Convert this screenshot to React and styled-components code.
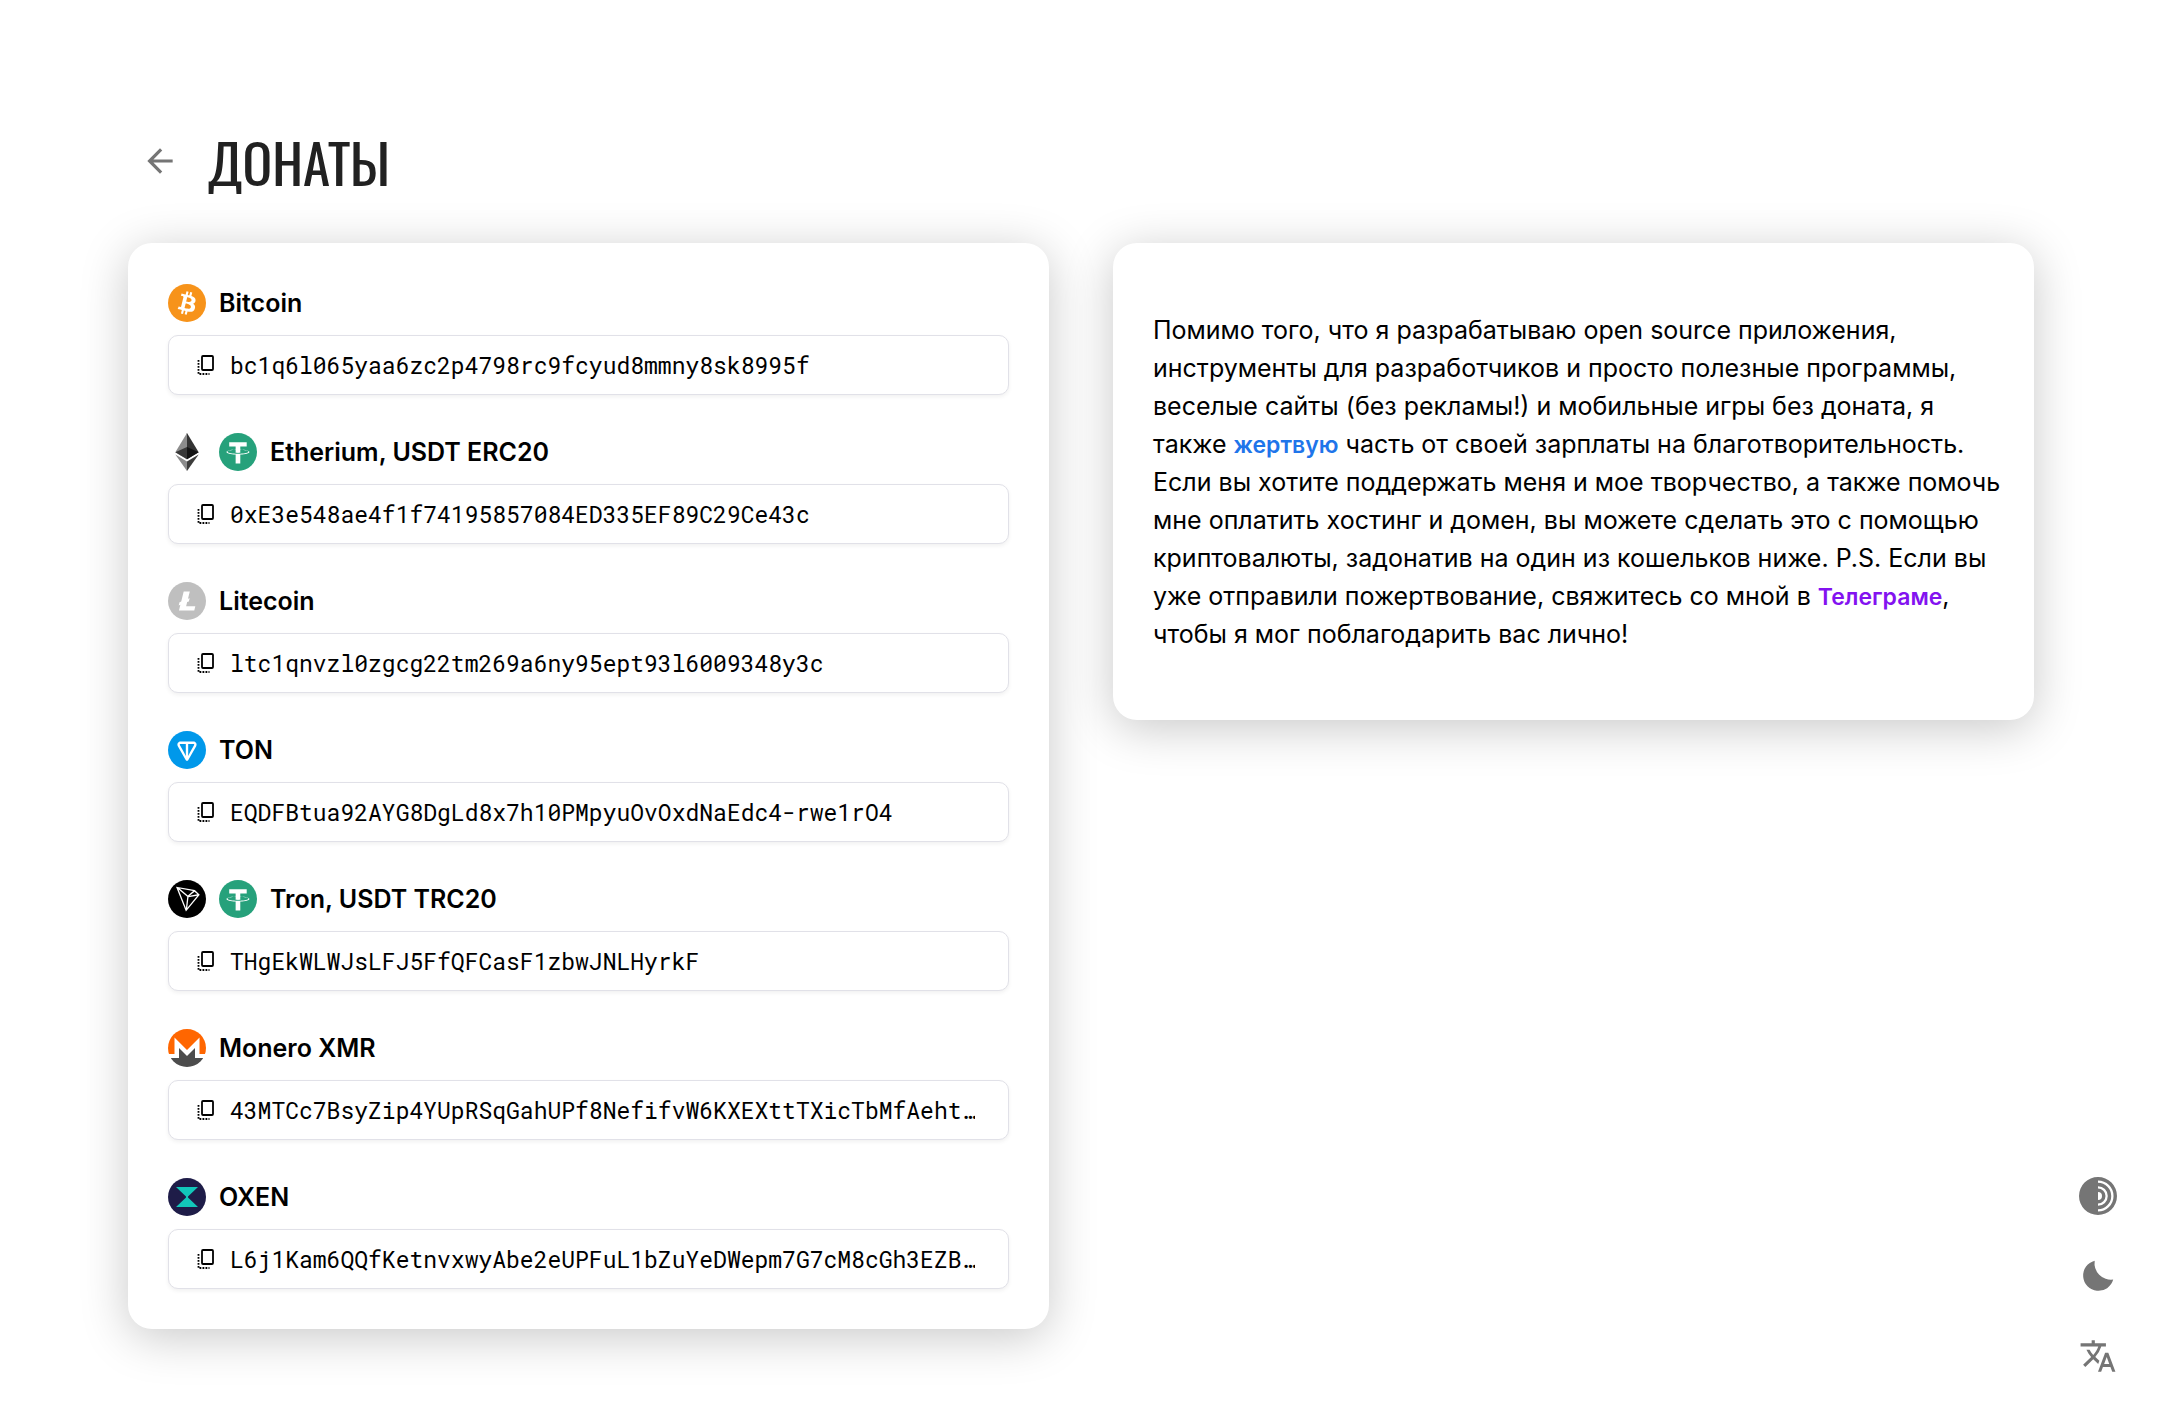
import React from "react";
import styled, { createGlobalStyle } from "styled-components";
import { MdArrowBack, MdTranslate } from "react-icons/md";

const GlobalStyle = createGlobalStyle`
  * {
    box-sizing: border-box;
  }

  body {
    margin: 0;
    background-color: #fff;
    color: #000;
    font-family: Inter, "Liberation Sans", sans-serif;
    font-size: 25px;
  }
`;

const Page = styled.main`
  padding: 120px 128px 80px;
`;

const Header = styled.header`
  display: flex;
  align-items: center;
  gap: 16px;
  margin-bottom: 41px;
`;

const Title = styled.h1`
  margin: 0;
  color: #212121;
  font-family: Oswald, "Roboto Condensed", "Open Sans Condensed",
    "Liberation Sans Narrow", "DejaVu Sans Condensed", sans-serif;
  font-size: 55px;
  font-weight: 400;
  line-height: 82px;
  text-transform: uppercase;
`;

const IconButton = styled.button`
  display: flex;
  align-items: center;
  justify-content: center;
  width: 64px;
  height: 64px;
  padding: 0;
  border: none;
  border-radius: 50%;
  background: none;
  color: #757575;
  cursor: pointer;

  svg {
    width: 38px;
    height: 38px;
  }
`;

const Columns = styled.div`
  display: grid;
  grid-template-columns: repeat(2, minmax(0, 1fr));
  align-items: start;
  gap: 64px;
`;

const Card = styled.section`
  padding: ${(props) => (props.$text ? "68px 32px 67px 40px" : "41px 40px 40px")};
  border-radius: 24px;
  background-color: #fff;
  box-shadow: 0 8px 48px rgba(0, 0, 0, 0.22);
`;

const WalletList = styled.ul`
  display: flex;
  flex-direction: column;
  gap: 38px;
  margin: 0;
  padding: 0;
  list-style: none;
`;

const WalletName = styled.h2`
  display: flex;
  align-items: center;
  gap: 13px;
  margin: 0 0 13px;
  font-size: 25px;
  font-weight: 600;
  line-height: 38px;

  svg {
    flex: none;
    width: 38px;
    height: 38px;
  }
`;

const Address = styled.button`
  display: flex;
  align-items: center;
  gap: 15px;
  width: 100%;
  height: 60px;
  padding: 0 28px;
  border: 1px solid #e1e1e8;
  border-radius: 10px;
  background-color: #fff;
  box-shadow: 0 2px 4px rgba(0, 0, 0, 0.06);
  color: #000;
  font-family: "Roboto Mono", "JetBrains Mono", "DejaVu Sans Mono", monospace;
  font-size: 23px;
  line-height: 32px;
  text-align: left;
  cursor: pointer;

  svg {
    flex: none;
    width: 18px;
    height: 20px;
  }

  span {
    overflow: hidden;
    text-overflow: ellipsis;
    white-space: nowrap;
  }
`;

const Text = styled.p`
  margin: 0;
  line-height: 38px;
`;

const Link = styled.a`
  color: ${(props) => props.$color};
  font-size: 23px;
  font-weight: 600;
  line-height: 23px;
  text-decoration: none;
`;

const Tools = styled.nav`
  position: fixed;
  right: 32px;
  bottom: 32px;
  display: flex;
  flex-direction: column;
  gap: 16px;
`;

const BitcoinIcon = () => (
  <svg viewBox="0 0 32 32" aria-hidden="true">
    <circle cx="16" cy="16" r="16" fill="#f7931a" />
    <path
      fill="#fff"
      d="M23.189 14.02c.314-2.096-1.283-3.223-3.465-3.975l.708-2.84-1.728-.43-.69 2.765c-.454-.114-.92-.22-1.385-.326l.695-2.783L15.596 6l-.708 2.839c-.376-.086-.746-.17-1.104-.26l.002-.009-2.384-.595-.46 1.846s1.283.294 1.256.312c.7.175.826.638.805 1.006l-.806 3.235c.048.012.11.03.18.057l-.183-.045-1.13 4.532c-.086.212-.303.531-.793.41.018.025-1.256-.313-1.256-.313l-.858 1.978 2.25.561c.418.105.828.215 1.231.318l-.715 2.872 1.727.43.708-2.84c.472.127.93.245 1.378.357l-.706 2.828 1.728.43.715-2.866c2.948.558 5.164.333 6.097-2.333.752-2.146-.037-3.385-1.588-4.192 1.13-.26 1.98-1.003 2.207-2.538zm-3.95 5.538c-.533 2.147-4.148.986-5.32.695l.95-3.805c1.172.293 4.929.872 4.37 3.11zm.535-5.569c-.487 1.953-3.495.96-4.47.717l.86-3.45c.975.243 4.118.696 3.61 2.733z"
    />
  </svg>
);

const EthereumIcon = () => (
  <svg viewBox="0 0 784.37 1277.39" aria-hidden="true">
    <polygon
      fill="#343434"
      points="392.07,0 383.5,29.11 383.5,873.74 392.07,882.29 784.13,650.54"
    />
    <polygon fill="#8c8c8c" points="392.07,0 0,650.54 392.07,882.29 392.07,472.33" />
    <polygon
      fill="#3c3c3b"
      points="392.07,956.52 387.24,962.41 387.24,1263.28 392.07,1277.38 784.37,724.89"
    />
    <polygon fill="#8c8c8c" points="392.07,1277.38 392.07,956.52 0,724.89" />
    <polygon fill="#141414" points="392.07,882.29 784.13,650.54 392.07,472.33" />
    <polygon fill="#393939" points="0,650.54 392.07,882.29 392.07,472.33" />
  </svg>
);

const TetherIcon = () => (
  <svg viewBox="0 0 32 32" aria-hidden="true">
    <circle cx="16" cy="16" r="16" fill="#26a17b" />
    <path
      fill="#fff"
      d="M17.922 17.383v-.002c-.11.008-.677.042-1.942.042-1.01 0-1.721-.03-1.971-.042v.003c-3.888-.171-6.79-.848-6.79-1.658 0-.809 2.902-1.486 6.79-1.66v2.644c.254.018.982.061 1.988.061 1.207 0 1.812-.05 1.925-.06v-2.643c3.88.173 6.775.85 6.775 1.658 0 .81-2.895 1.485-6.775 1.657m0-3.59v-2.366h5.414V7.819H8.595v3.608h5.414v2.365c-4.4.202-7.709 1.074-7.709 2.118 0 1.044 3.309 1.915 7.709 2.118v7.582h3.913v-7.584c4.393-.202 7.694-1.073 7.694-2.116 0-1.043-3.301-1.914-7.694-2.117"
    />
  </svg>
);

const LitecoinIcon = () => (
  <svg viewBox="0 0 32 32" aria-hidden="true">
    <circle cx="16" cy="16" r="16" fill="#bfbfbf" />
    <path
      fill="#fff"
      d="M10.427 19.214L9 19.768l.688-2.759 1.444-.58L13.213 8h5.129l-1.519 6.196 1.41-.571-.68 2.75-1.427.571-.848 3.483H23L22.127 24H9.252z"
    />
  </svg>
);

const TonIcon = () => (
  <svg viewBox="0 0 56 56" aria-hidden="true">
    <circle cx="28" cy="28" r="28" fill="#0098ea" />
    <path
      fill="#fff"
      d="M37.56 15.63H18.44c-3.52 0-5.75 3.79-3.98 6.86l11.8 20.45c.77 1.34 2.7 1.34 3.47 0l11.81-20.45c1.77-3.06-.46-6.86-3.98-6.86zM26.25 36.81l-2.57-4.98-6.2-11.09c-.41-.71.1-1.62.96-1.62h7.81zm12.26-16.07l-6.2 11.1-2.57 4.97V19.12h7.82c.86 0 1.36.91.95 1.62z"
    />
  </svg>
);

const TronIcon = () => (
  <svg viewBox="0 0 32 32" aria-hidden="true">
    <circle cx="16" cy="16" r="16" />
    <path
      fill="#fff"
      transform="translate(-1.5 -2.4) scale(1.1)"
      d="M21.932 9.913L7.5 7.257l7.595 19.112 10.583-12.894-3.746-3.562zm-.232 1.17l2.208 2.099-6.038 1.093 3.83-3.192zm-5.142 2.973l-6.364-5.278 10.402 1.914-4.038 3.364zm-.453.934l-1.038 8.58L9.472 9.487l6.633 5.502zm.96.455l6.687-1.21-7.67 9.343.983-8.133z"
    />
  </svg>
);

const MoneroIcon = () => (
  <svg viewBox="0 0 38 38" aria-hidden="true">
    <clipPath id="monero-circle">
      <circle cx="19" cy="19" r="19" />
    </clipPath>
    <g clipPath="url(#monero-circle)">
      <path fill="#ff6600" d="M0 25V0h38v25h-6.5V8.5L19 21 6.5 8.5V25z" />
      <path fill="#4c4c4c" d="M0 29h11V19l8 8 8-8v10h11v9H0z" />
    </g>
  </svg>
);

const OxenIcon = () => (
  <svg viewBox="0 0 38 38" aria-hidden="true">
    <circle cx="19" cy="19" r="19" fill="#1e1c48" />
    <path fill="#12c7ba" d="M8 9h22l-10 9.5v1L30 29H8l10-9.5v-1z" />
  </svg>
);

const CopyIcon = () => (
  <svg viewBox="0 0 18 20" fill="none" stroke="currentColor" aria-hidden="true">
    <rect x="5" y="1" width="11" height="14" rx="1" strokeWidth="1.8" />
    <path strokeWidth="1.8" strokeDasharray="1.8 1.2" d="M1.5 5v14h11" />
  </svg>
);

const TorIcon = () => (
  <svg viewBox="0 0 24 24" fill="currentColor" aria-hidden="true">
    <path
      fillRule="evenodd"
      d="M12 21.82v-1.46A8.36 8.36 0 0 0 20.36 12 8.36 8.36 0 0 0 12 3.64V2.18A9.83 9.83 0 0 1 21.82 12 9.83 9.83 0 0 1 12 21.82zm0-5.09A4.74 4.74 0 0 0 16.73 12 4.74 4.74 0 0 0 12 7.27V5.82A6.18 6.18 0 0 1 18.18 12 6.18 6.18 0 0 1 12 18.18zm0-7.27A2.55 2.55 0 0 1 14.54 12 2.55 2.55 0 0 1 12 14.54zM0 12a12 12 0 0 0 24 0 12 12 0 0 0-24 0z"
    />
  </svg>
);

const MoonIcon = () => (
  <svg viewBox="0 0 38 38" fill="currentColor" aria-hidden="true">
    <path d="M15.7 3.7A15.3 15.3 0 1 0 34.2 22.6 16.5 16.5 0 0 1 15.7 3.7z" />
  </svg>
);

const wallets = [
  {
    name: "Bitcoin",
    icons: [BitcoinIcon],
    address: "bc1q6l065yaa6zc2p4798rc9fcyud8mmny8sk8995f",
  },
  {
    name: "Etherium, USDT ERC20",
    icons: [EthereumIcon, TetherIcon],
    address: "0xE3e548ae4f1f74195857084ED335EF89C29Ce43c",
  },
  {
    name: "Litecoin",
    icons: [LitecoinIcon],
    address: "ltc1qnvzl0zgcg22tm269a6ny95ept93l6009348y3c",
  },
  {
    name: "TON",
    icons: [TonIcon],
    address: "EQDFBtua92AYG8DgLd8x7h10PMpyuOvOxdNaEdc4-rwe1rO4",
  },
  {
    name: "Tron, USDT TRC20",
    icons: [TronIcon, TetherIcon],
    address: "THgEkWLWJsLFJ5FfQFCasF1zbwJNLHyrkF",
  },
  {
    name: "Monero XMR",
    icons: [MoneroIcon],
    address: "43MTCc7BsyZip4YUpRSqGahUPf8NefifvW6KXEXttTXicTbMfAeht…",
  },
  {
    name: "OXEN",
    icons: [OxenIcon],
    address: "L6j1Kam6QQfKetnvxwyAbe2eUPFuL1bZuYeDWepm7G7cM8cGh3EZB…",
  },
];

const Wallet = ({ name, icons, address }) => {
  return (
    <li>
      <WalletName>
        {icons.map((Icon, index) => (
          <Icon key={index} />
        ))}
        {name}
      </WalletName>
      <Address
        type="button"
        onClick={() => navigator.clipboard?.writeText(address)}
      >
        <CopyIcon />
        <span>{address}</span>
      </Address>
    </li>
  );
};

const App = () => {
  return (
    <>
      <GlobalStyle />
      <Page>
        <Header>
          <IconButton type="button" aria-label="Назад">
            <MdArrowBack />
          </IconButton>
          <Title>Донаты</Title>
        </Header>
        <Columns>
          <Card>
            <WalletList>
              {wallets.map((item) => (
                <Wallet key={item.name} {...item} />
              ))}
            </WalletList>
          </Card>
          <Card $text>
            <Text>
              Помимо того, что я разрабатываю open source приложения,
              инструменты для разработчиков и просто полезные программы,
              веселые сайты (без рекламы!) и мобильные игры без доната, я также{" "}
              <Link href="#charity" $color="#1f75ea">
                жертвую
              </Link>{" "}
              часть от своей зарплаты на благотворительность. Если вы хотите
              поддержать меня и мое творчество, а также помочь мне оплатить
              хостинг и домен, вы можете сделать это с помощью криптовалюты,
              задонатив на один из кошельков ниже. P.S. Если вы уже отправили
              пожертвование, свяжитесь со мной в{" "}
              <Link href="#telegram" $color="#8312f0">
                Телеграме
              </Link>
              , чтобы я мог поблагодарить вас лично!
            </Text>
          </Card>
        </Columns>
      </Page>
      <Tools>
        <IconButton type="button" aria-label="Tor">
          <TorIcon />
        </IconButton>
        <IconButton type="button" aria-label="Тёмная тема">
          <MoonIcon />
        </IconButton>
        <IconButton type="button" aria-label="Язык">
          <MdTranslate />
        </IconButton>
      </Tools>
    </>
  );
};

export default App;
